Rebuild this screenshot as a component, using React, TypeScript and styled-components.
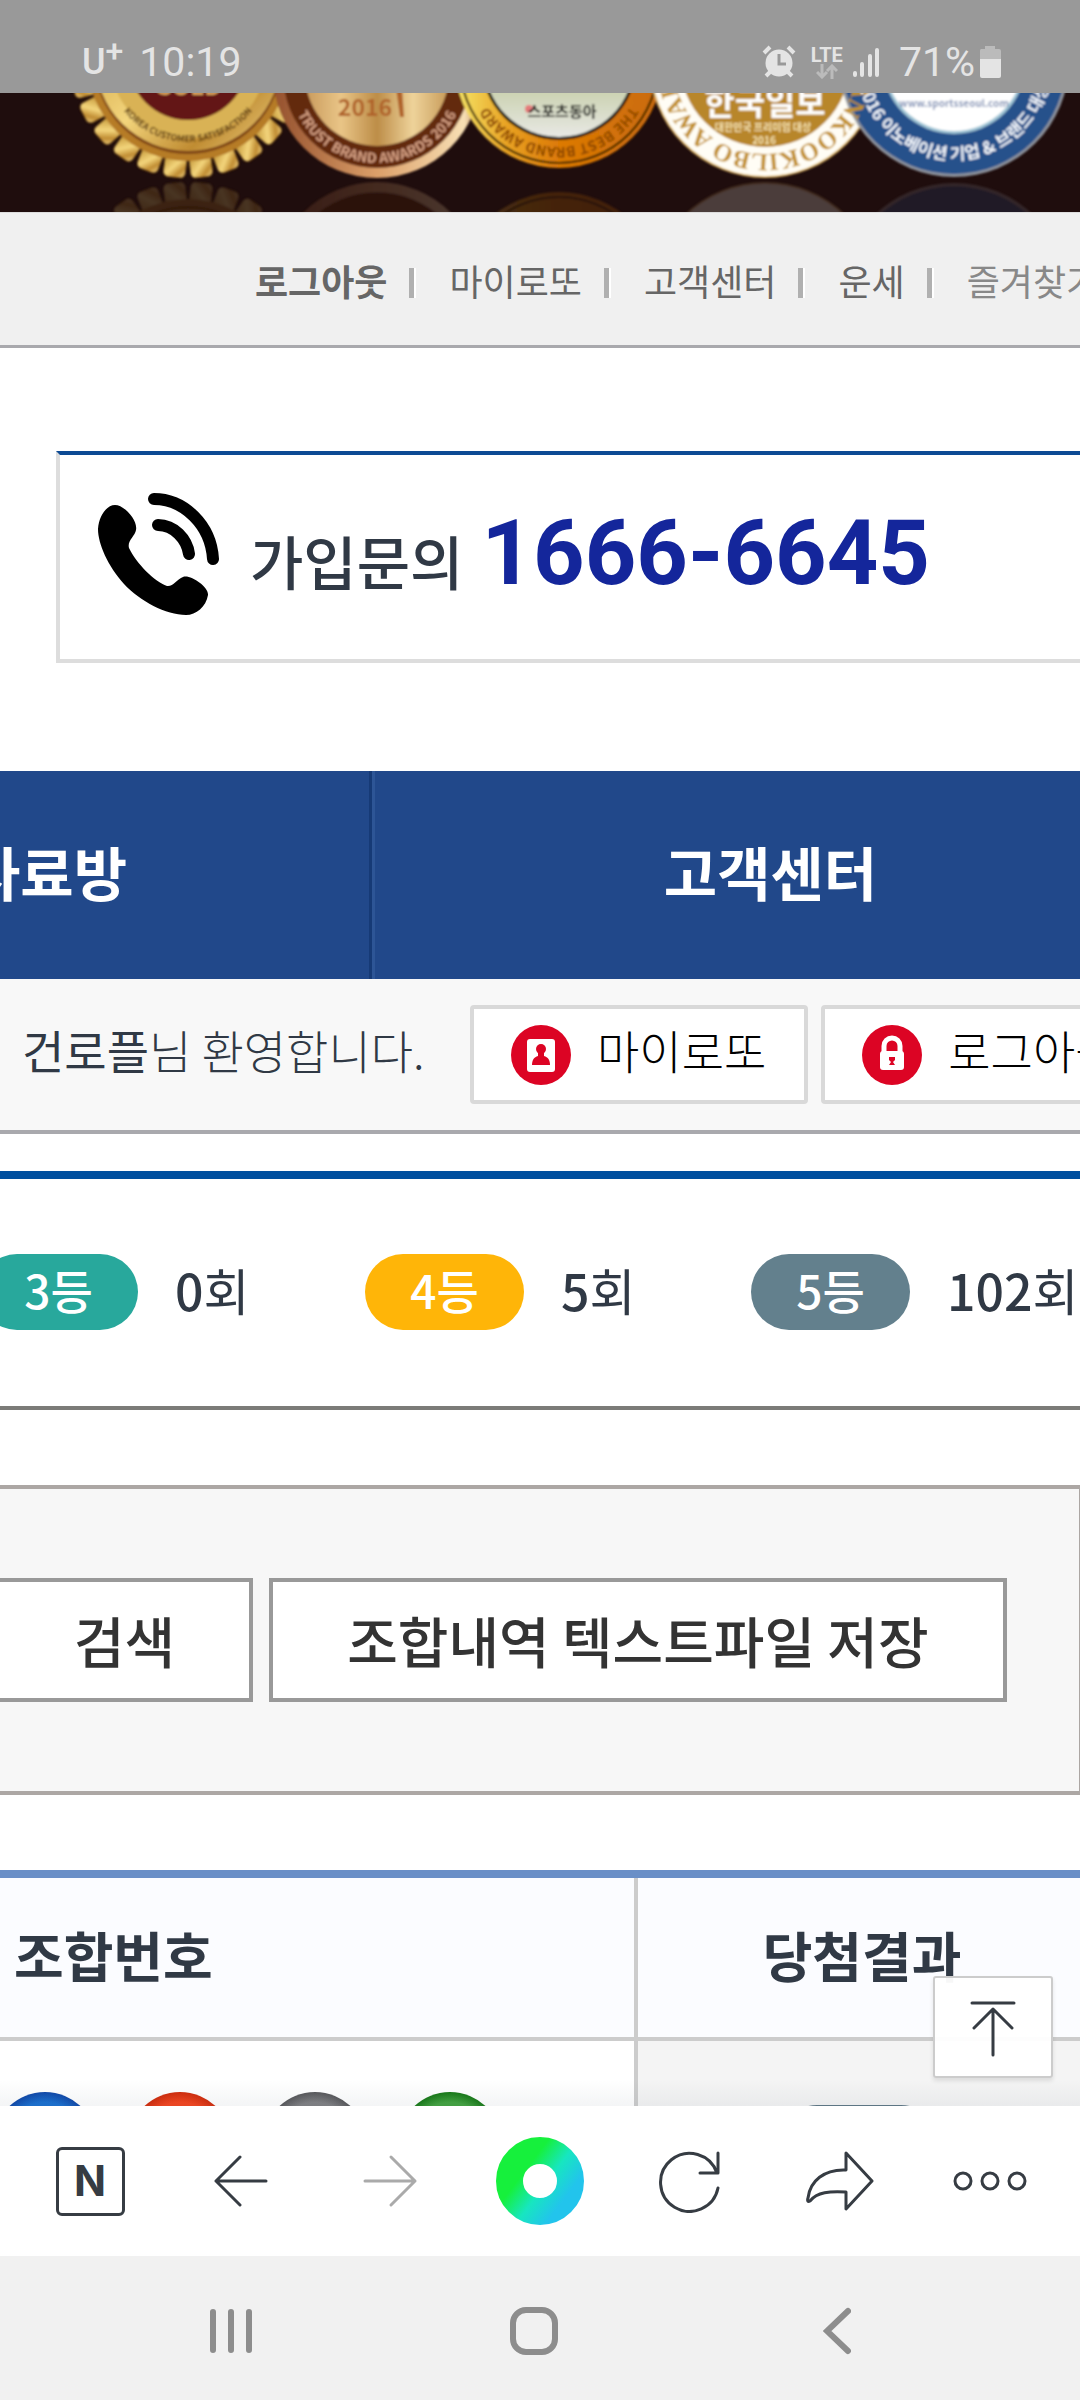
import React from "react";
import styled, { createGlobalStyle } from "styled-components";

const GlobalStyle = createGlobalStyle`
  * { box-sizing: border-box; }
  body { margin: 0; background: #fff; }
  button, a { font: inherit; color: inherit; text-decoration: none; }
  button { margin: 0; padding: 0; border: 0; background: none; }
  ul { margin: 0; padding: 0; list-style: none; }
`;

const Screen = styled.div`
  display: flex;
  flex-direction: column;
  height: 100vh;
  overflow: hidden;
  color: #303945;
  font-family: "Noto Sans CJK KR", "Noto Sans", sans-serif;
`;

/* ---------- status bar ---------- */

const StatusBar = styled.header`
  display: flex;
  justify-content: space-between;
  flex: none;
  height: 93px;
  padding: 39px 77px 0 82px;
  background: #999;
  color: #e4e4e4;
  font: 400 41px/46px Roboto, sans-serif;
`;

const StatusGroup = styled.div`
  display: flex;
  align-items: center;
  height: 46px;
`;

const Carrier = styled.span`
  display: flex;
  margin-right: 16px;
  font-weight: 500;
  font-size: 36px;
  sup {
    font-size: 32px;
    line-height: 24px;
  }
`;

const StatusIcon = styled.svg<{ $gap: number }>`
  flex: none;
  margin-right: ${(p) => p.$gap}px;
`;

const Network = styled.span`
  display: flex;
  flex-direction: column;
  align-items: center;
  margin-right: 9px;
  font-weight: 700;
  font-size: 20px;
  line-height: 18px;
`;

/* ---------- web page ---------- */

const Page = styled.main`
  position: relative;
  flex: 1;
  min-height: 0;
  overflow: hidden;
  background: #fff;
`;

const Awards = styled.svg`
  display: block;
  width: 100%;
  height: 119px;
  background: #1f0d0d;
`;

const TopLinks = styled.nav`
  display: flex;
  align-items: center;
  height: 136px;
  padding: 2px 0 0 255px;
  overflow: hidden;
  background: #f0f0f0;
  border-top: 1px solid #ddd;
  border-bottom: 3px solid #a9a9ad;
  font-size: 36px;
  line-height: 52px;
  white-space: nowrap;
`;

const TopLink = styled.a<{ $bold?: boolean; $dim?: boolean }>`
  flex: none;
  color: ${(p) => (p.$dim ? "#888" : "#666")};
  font-weight: ${(p) => (p.$bold ? 700 : 400)};
  &:not(:first-child)::before {
    content: "";
    display: inline-block;
    width: 5px;
    height: 30px;
    margin: 0 33px 0 22px;
    background: #b0b0b0;
    border-right: 2px solid #fff;
    vertical-align: -2px;
  }
`;

const Inquiry = styled.section`
  display: flex;
  align-items: center;
  height: 212px;
  margin: 103px 0 108px 56px;
  padding: 0 0 6px 37px;
  border: 4px solid #ddd;
  border-top-color: #0d4a94;
  border-right: 0;
  white-space: nowrap;
`;

const InquiryLabel = styled.span`
  margin: 12px 18px 0 31px;
  font-weight: 500;
  font-size: 58px;
  line-height: 80px;
`;

const InquiryNumber = styled.a`
  color: #14269b;
  font: 700 90px/108px Roboto, sans-serif;
`;

const MainMenu = styled.nav`
  display: flex;
  height: 208px;
  background: #21488a;
  color: #fff;
  font-weight: 700;
  font-size: 58px;
  white-space: nowrap;
`;

const MenuLeft = styled.a`
  display: flex;
  flex: none;
  align-items: center;
  justify-content: flex-end;
  width: 372px;
  padding: 0 242px 8px 0;
  border-right: 3px solid #163a76;
`;

const MenuCenter = styled.a`
  display: flex;
  flex: 1;
  align-items: center;
  justify-content: center;
  padding: 0 0 8px 86px;
  border-left: 3px solid #2d5596;
`;

const Welcome = styled.section`
  display: flex;
  height: 155px;
  padding: 26px 0 0 22px;
  overflow: hidden;
  background: #f8f8f8;
  border-bottom: 4px solid #a9a9ad;
  font-weight: 300;
  font-size: 46px;
  line-height: 88px;
  white-space: nowrap;
`;

const Greeting = styled.p`
  flex: none;
  width: 448px;
  margin: 0;
`;

const AccountButton = styled.button`
  display: flex;
  flex: none;
  align-items: center;
  gap: 26px;
  height: 99px;
  margin-right: 13px;
  padding: 0 38px 0 37px;
  background: #fff;
  border: 4px solid #d9d9d9;
  border-radius: 4px;
  color: #000;
`;

const ButtonText = styled.span`
  padding-bottom: 12px;
  line-height: 76px;
`;

const Ranks = styled.section`
  display: flex;
  height: 239px;
  margin-top: 37px;
  padding-top: 75px;
  overflow: hidden;
  border-top: 8px solid #004f9f;
  border-bottom: 4px solid #7b7b78;
`;

const RankList = styled.ul`
  display: flex;
  margin-left: -21px;
  font-size: 50px;
  line-height: 70px;
  white-space: nowrap;
`;

const Rank = styled.li`
  display: flex;
  flex: none;
  gap: 37px;
  width: 386px;
`;

const Count = styled.b`
  font-weight: 500;
`;

const Pill = styled.span<{ $color: string }>`
  flex: none;
  width: 159px;
  height: 76px;
  border-radius: 38px;
  background: ${(p) => p.$color};
  color: #fff;
  font-weight: 500;
  font-size: 46px;
  text-align: center;
`;

const SearchPanel = styled.form`
  display: flex;
  gap: 16px;
  height: 310px;
  margin-top: 75px;
  padding: 89px 0;
  background: #f7f7f7;
  border: solid #aca7a4;
  border-width: 4px 1px 4px 0;
`;

const PanelButton = styled.button<{ $cut?: boolean }>`
  height: 124px;
  padding: 0 74px 2px;
  background: #fff;
  border: 4px solid #999;
  border-left-width: ${(p) => (p.$cut ? 0 : 4)}px;
  color: #333;
  font-weight: 500;
  font-size: 55px;
  line-height: 80px;
  white-space: nowrap;
`;

const Results = styled.table`
  width: 100%;
  margin-top: 75px;
  border-spacing: 0;
  border-top: 8px solid #6a8fc7;
  table-layout: fixed;
`;

const HeadCell = styled.th<{ $first?: boolean }>`
  width: ${(p) => (p.$first ? "638px" : "auto")};
  height: 163px;
  padding: 0 0 6px ${(p) => (p.$first ? 14 : 6)}px;
  background: #fbfcff;
  border: solid #ccc;
  border-width: 0 ${(p) => (p.$first ? 4 : 0)}px 4px 0;
  font-weight: 700;
  font-size: 54px;
  line-height: 80px;
  text-align: ${(p) => (p.$first ? "left" : "center")};
`;

const Cell = styled.td<{ $first?: boolean }>`
  height: 200px;
  padding: ${(p) => (p.$first ? 51 : 64)}px 0 0;
  background: ${(p) => (p.$first ? "#fff" : "#f4f4f4")};
  border-right: ${(p) => (p.$first ? 4 : 0)}px solid #ccc;
  vertical-align: top;
`;

const Balls = styled.div`
  display: flex;
  gap: 31px;
  margin-left: -7px;
`;

const Ball = styled.span<{ $color: string; $edge: string }>`
  width: 104px;
  height: 104px;
  border-radius: 50%;
  background: radial-gradient(circle closest-side, ${(p) => p.$color} 80%, ${(p) => p.$edge} 100%);
`;

const ResultPill = styled.div`
  width: 160px;
  height: 76px;
  margin: 0 auto;
  border-radius: 38px;
  background: #5f7886;
`;

const TopButton = styled.button`
  position: absolute;
  right: 27px;
  bottom: 28px;
  display: grid;
  place-items: center;
  width: 120px;
  height: 102px;
  padding-top: 4px;
  background: rgba(255, 255, 255, 0.96);
  border: 2px solid #ccc;
  border-radius: 3px;
  box-shadow: 0 3px 4px rgba(0, 0, 0, 0.1);
`;

const Shade = styled.div`
  position: absolute;
  left: 0;
  right: 0;
  bottom: 0;
  height: 26px;
  background: linear-gradient(rgba(60, 80, 100, 0), rgba(60, 80, 100, 0.06));
`;

/* ---------- bottom bars ---------- */

const BrowserBar = styled.nav`
  display: grid;
  grid-template-columns: repeat(7, 1fr);
  flex: none;
  height: 150px;
  padding: 0 15px;
  background: #fff;
`;

const SystemBar = styled.nav`
  display: grid;
  grid-template-columns: repeat(3, 1fr);
  flex: none;
  height: 144px;
  padding: 6px 92px 0 80px;
  background: #f1f1f1;
`;

const BarButton = styled.button`
  display: grid;
  place-items: center;
`;

const NLogo = styled.span`
  display: grid;
  place-items: center;
  width: 69px;
  height: 69px;
  border: 3px solid #363c43;
  border-radius: 6px;
  color: #363c43;
  font: 700 42px/48px Inter, sans-serif;
`;

const arc = (cx: number, cy: number, r: number, outward: boolean) =>
  outward
    ? `M${cx - r} ${cy}A${r} ${r} 0 0 0 ${cx + r} ${cy}`
    : `M${cx + r} ${cy}A${r} ${r} 0 0 1 ${cx - r} ${cy}`;

const Medals = () => (
  <g>
    <g fill="url(#gold)">
      {Array.from({ length: 26 }, (_, i) => (
        <rect
          key={i}
          x="177"
          y="154"
          width="22"
          height="24"
          rx="5"
          stroke="#6b4310"
          strokeWidth="1"
          transform={`rotate(${(i + 0.5) * (360 / 26)} 188 60)`}
        />
      ))}
    </g>
    <circle cx="188" cy="60" r="101" fill="#b67b28" />
    <circle cx="188" cy="60" r="94" fill="#7c4312" />
    <circle cx="188" cy="58" r="93" fill="url(#gold)" />
    <circle cx="188" cy="60" r="78" fill="#d9b254" />
    <circle cx="188" cy="60" r="60" fill="#641414" />

    <circle cx="377" cy="74" r="104" fill="url(#bronze)" />
    <circle cx="377" cy="74" r="94" fill="#642a10" />
    <circle cx="377" cy="74" r="72" fill="url(#brushed)" />

    <circle cx="559" cy="64" r="104" fill="url(#orange)" />
    <circle cx="559" cy="64" r="99" fill="none" stroke="#2a1a05" strokeWidth="2" />
    <circle cx="559" cy="62" r="78" fill="#15150c" />
    <circle cx="559" cy="62" r="75" fill="url(#sage)" />

    <circle cx="765" cy="62" r="115" fill="#fffdf5" stroke="#d8b264" strokeWidth="2" />
    <circle cx="765" cy="62" r="85" fill="#b8862a" />

    <circle cx="954" cy="62" r="115" fill="#8d939d" />
    <circle cx="954" cy="62" r="112" fill="#28518b" />
    <circle cx="954" cy="62" r="72" fill="#9cc3d4" />
    <circle cx="954" cy="62" r="69" fill="#fff" />
  </g>
);

const AwardBanner = () => (
  <Awards viewBox="0 93 1080 119" preserveAspectRatio="xMidYMin slice" role="img" aria-label="수상 내역">
    <defs>
      <linearGradient id="gold" x1="0" y1="0" x2="1" y2="1">
        <stop offset="0" stopColor="#b98828" />
        <stop offset="0.5" stopColor="#f3d57c" />
        <stop offset="0.75" stopColor="#c08c32" />
        <stop offset="1" stopColor="#efd386" />
      </linearGradient>
      <linearGradient id="bronze">
        <stop offset="0" stopColor="#94502d" />
        <stop offset="0.5" stopColor="#dca06a" />
        <stop offset="0.92" stopColor="#f7dfb4" />
        <stop offset="1" stopColor="#b57c50" />
      </linearGradient>
      <linearGradient id="brushed">
        <stop offset="0" stopColor="#c99a5c" />
        <stop offset="0.25" stopColor="#e9c587" />
        <stop offset="0.5" stopColor="#bd8d48" />
        <stop offset="0.75" stopColor="#eed39a" />
        <stop offset="1" stopColor="#c79a58" />
      </linearGradient>
      <linearGradient id="orange">
        <stop offset="0" stopColor="#f6e86a" />
        <stop offset="0.25" stopColor="#e8a223" />
        <stop offset="0.5" stopColor="#dd7a06" />
        <stop offset="1" stopColor="#c96a08" />
      </linearGradient>
      <linearGradient id="sage" x1="0" y1="0" x2="0" y2="1">
        <stop offset="0.6" stopColor="#c2cba2" />
        <stop offset="1" stopColor="#e8e8e4" />
      </linearGradient>
      <filter id="soft">
        <feGaussianBlur stdDeviation="1" />
      </filter>
      <path id="arc1" d={arc(188, 60, 82, true)} />
      <path id="arc2" d={arc(377, 74, 89, true)} />
      <path id="arc3" d={arc(559, 64, 83, false)} />
      <path id="arc4" d={arc(765, 62, 92, false)} />
      <path id="arc5" d={arc(954, 62, 98, true)} />
    </defs>
    <g filter="url(#soft)">
      <g transform="translate(0 360) scale(1 -1)" opacity="0.2">
        <Medals />
      </g>
      <Medals />
      <g textAnchor="middle" fontFamily="'Noto Sans CJK KR', sans-serif" fontWeight="700">
        <text x="188" y="95" fontSize="24" fill="#d9a05c">GOLD</text>
        <text fontSize="9" fill="#5a3a10">
          <textPath href="#arc1" startOffset="50%">KOREA CUSTOMER SATISFACTION</textPath>
        </text>
        <text x="365" y="116" fontSize="23" fill="#b0642a">2016</text>
        <path d="M396 88l6 0 2 29-4 0z" fill="#b0642a" />
        <text fontSize="14" fill="#d5a184">
          <textPath href="#arc2" startOffset="50%">TRUST BRAND AWARDS 2016</textPath>
        </text>
        <circle cx="529" cy="109" r="4" fill="#e57a7a" />
        <text x="562" y="117" fontSize="15" fill="#111">스포츠동아</text>
        <text fontSize="14" fill="#8a4503">
          <textPath href="#arc3" startOffset="50%">THE BEST BRAND AWARD</textPath>
        </text>
        <text x="765" y="115" fontSize="33" fill="#fff">한국일보</text>
        <text x="763" y="131" fontSize="10" fill="#f6e3b0">대한민국 프리미엄 대상</text>
        <text x="764" y="144" fontSize="10" fill="#f6e3b0">2016</text>
        <text fontSize="25" fill="#c3922f" fontFamily="'Liberation Serif', serif">
          <textPath href="#arc4" startOffset="50%">HANKOOKILBO AWARD</textPath>
        </text>
        <text x="954" y="107" fontSize="10" fill="#8796b8">www.sportsseoul.com</text>
        <text fontSize="17" fill="#f2f5fa">
          <textPath href="#arc5" startOffset="50%">2016 이노베이션 기업 &amp; 브랜드 대상</textPath>
        </text>
      </g>
    </g>
  </Awards>
);

const ranks = [
  { name: "3등", color: "#28a89c", count: "0" },
  { name: "4등", color: "#ffb508", count: "5" },
  { name: "5등", color: "#63808d", count: "102" },
];

const balls = [
  { color: "#1a70d0", edge: "#1048a8" },
  { color: "#f4451f", edge: "#cf2c0c" },
  { color: "#808083", edge: "#57575a" },
  { color: "#43a340", edge: "#177817" },
];

const line = { fill: "none", stroke: "#363c43", strokeWidth: 3, strokeLinecap: "round", strokeLinejoin: "round" } as const;

export default function App() {
  return (
    <Screen>
      <GlobalStyle />
      <StatusBar>
        <StatusGroup>
          <Carrier>U<sup>+</sup></Carrier>
          <span>10:19</span>
        </StatusGroup>
        <StatusGroup>
          <StatusIcon $gap={15} width="34" height="34" viewBox="0 0 34 34" aria-hidden="true">
            <circle cx="17" cy="18" r="13.5" fill="#e4e4e4" />
            <path d="M2 8l6-6M32 8l-6-6M9 26l-5 5M25 26l5 5" stroke="#e4e4e4" strokeWidth="4" />
            <path d="M17 9v10h7" fill="none" stroke="#999" strokeWidth="3" />
          </StatusIcon>
          <Network>
            LTE
            <svg width="22" height="15" viewBox="0 0 22 15" fill="none" stroke="#bbb" strokeWidth="3" aria-hidden="true">
              <path d="M6 0v12M1 8l5 5 5-5M16 15V3M11 7l5-5 5 5" />
            </svg>
          </Network>
          <StatusIcon $gap={19} width="28" height="32" viewBox="0 0 28 32" aria-hidden="true">
            <path d="M3 27v2M10 18v11M18 10v19M25 4v25" stroke="#e4e4e4" strokeWidth="4" strokeLinecap="round" />
          </StatusIcon>
          <span>71%</span>
          <StatusIcon $gap={0} width="28" height="34" viewBox="0 0 28 34" aria-hidden="true">
            <path d="M6 4h4V1h10v3h4a2 2 0 0 1 2 2v8H5V6a2 2 0 0 1 1-2z" fill="#bbb" />
            <path d="M5 14h21v17a2 2 0 0 1-2 2H7a2 2 0 0 1-2-2z" fill="#e4e4e4" />
          </StatusIcon>
        </StatusGroup>
      </StatusBar>

      <Page>
        <AwardBanner />
        <TopLinks>
          <TopLink href="#logout" $bold>로그아웃</TopLink>
          <TopLink href="#my">마이로또</TopLink>
          <TopLink href="#help">고객센터</TopLink>
          <TopLink href="#fortune">운세</TopLink>
          <TopLink href="#favorite" $dim>즐겨찾기</TopLink>
        </TopLinks>

        <Inquiry>
          <svg width="122" height="122" viewBox="0 0 122 122" aria-hidden="true">
            <path
              d="M18 12C10 12 2 22 1 36c0 15 10 37 26 55 16 17 42 31 62 31 10 0 20-8 22-20 1-8-18-21-25-18-6 2-10 10-16 9-12-4-31-23-38-38-2-7 6-12 7-18C41 27 27 12 18 12z"
              fill="#000"
            />
            <path d="M57 6c30 0 57 26 59 60M61 32c16 0 29 14 31 29" fill="none" stroke="#000" strokeWidth="12" strokeLinecap="round" />
          </svg>
          <InquiryLabel>가입문의</InquiryLabel>
          <InquiryNumber href="tel:1666-6645">1666-6645</InquiryNumber>
        </Inquiry>

        <MainMenu>
          <MenuLeft href="#data">자료방</MenuLeft>
          <MenuCenter href="#help">고객센터</MenuCenter>
        </MainMenu>

        <Welcome>
          <Greeting><b>건로플</b>님 환영합니다.</Greeting>
          <AccountButton type="button">
            <svg width="60" height="60" viewBox="0 0 60 60" aria-hidden="true">
              <circle cx="30" cy="30" r="30" fill="#dc0424" />
              <rect x="16" y="14" width="28" height="33" rx="3" fill="#fff" />
              <circle cx="30" cy="24" r="5" fill="#dc0424" />
              <path d="M27 26h6v5c4 1 6 4 6 9H21c0-5 2-8 6-9z" fill="#dc0424" />
            </svg>
            <ButtonText>마이로또</ButtonText>
          </AccountButton>
          <AccountButton type="button">
            <svg width="60" height="60" viewBox="0 0 60 60" aria-hidden="true">
              <circle cx="30" cy="30" r="30" fill="#dc0424" />
              <path d="M22 29v-8a8 8 0 0 1 16 0v8" fill="none" stroke="#fff" strokeWidth="5" />
              <rect x="18" y="26" width="24" height="19" rx="3" fill="#fff" />
              <path d="M27 32h6v3l-2 2 2 3h-6l2-3-2-2z" fill="#dc0424" />
            </svg>
            <ButtonText>로그아웃</ButtonText>
          </AccountButton>
        </Welcome>

        <Ranks>
          <RankList>
            {ranks.map((r) => (
              <Rank key={r.name}>
                <Pill $color={r.color}>{r.name}</Pill>
                <span><Count>{r.count}</Count>회</span>
              </Rank>
            ))}
          </RankList>
        </Ranks>

        <SearchPanel onSubmit={(e) => e.preventDefault()}>
          <PanelButton type="submit" $cut>검색</PanelButton>
          <PanelButton type="button">조합내역 텍스트파일 저장</PanelButton>
        </SearchPanel>

        <Results>
          <thead>
            <tr>
              <HeadCell scope="col" $first>조합번호</HeadCell>
              <HeadCell scope="col">당첨결과</HeadCell>
            </tr>
          </thead>
          <tbody>
            <tr>
              <Cell $first>
                <Balls>
                  {balls.map((b) => (
                    <Ball key={b.color} $color={b.color} $edge={b.edge} />
                  ))}
                </Balls>
              </Cell>
              <Cell><ResultPill /></Cell>
            </tr>
          </tbody>
        </Results>

        <Shade />
        <TopButton type="button" aria-label="맨 위로">
          <svg width="46" height="56" viewBox="0 0 46 56" {...line}>
            <path d="M2 2h42M23 8v46M4 27L23 8l19 19" />
          </svg>
        </TopButton>
      </Page>

      <BrowserBar>
        <BarButton type="button" aria-label="홈"><NLogo>N</NLogo></BarButton>
        <BarButton type="button" aria-label="뒤로">
          <svg width="56" height="56" viewBox="0 0 56 56" {...line}><path d="M54 28H4M28 4L4 28l24 24" /></svg>
        </BarButton>
        <BarButton type="button" aria-label="앞으로">
          <svg width="56" height="56" viewBox="0 0 56 56" {...line} stroke="#aaa"><path d="M3 28h50M29 4l24 24-24 24" /></svg>
        </BarButton>
        <BarButton type="button" aria-label="그린닷">
          <svg width="88" height="88" viewBox="0 0 88 88">
            <defs>
              <linearGradient id="dot" x1="0.1" y1="0.2" x2="0.9" y2="0.8">
                <stop offset="0.2" stopColor="#16f03c" />
                <stop offset="0.6" stopColor="#17e6c0" />
                <stop offset="1" stopColor="#22c4ec" />
              </linearGradient>
            </defs>
            <circle cx="44" cy="44" r="30.5" fill="none" stroke="url(#dot)" strokeWidth="27" />
          </svg>
        </BarButton>
        <BarButton type="button" aria-label="새로고침">
          <svg width="64" height="64" viewBox="0 0 64 64" {...line}>
            <path d="M60 4v20H42M59 24A29 29 0 1 0 60 39" />
          </svg>
        </BarButton>
        <BarButton type="button" aria-label="공유">
          <svg width="68" height="60" viewBox="0 0 68 60" {...line}>
            <path d="M40 2l26 28-26 28V41C24 40 11 41 4 50c-2 1-3 0-2-3C4 30 18 18 40 19z" />
          </svg>
        </BarButton>
        <BarButton type="button" aria-label="더보기">
          <svg width="74" height="22" viewBox="0 0 74 22" {...line}>
            <circle cx="10" cy="11" r="8" />
            <circle cx="37" cy="11" r="8" />
            <circle cx="64" cy="11" r="8" />
          </svg>
        </BarButton>
      </BrowserBar>

      <SystemBar>
        <BarButton type="button" aria-label="최근 앱">
          <svg width="44" height="46" viewBox="0 0 44 46" stroke="#8d8d8d" strokeWidth="6" strokeLinecap="round">
            <path d="M4 4v38M22 4v38M40 4v38" />
          </svg>
        </BarButton>
        <BarButton type="button" aria-label="시스템 홈">
          <svg width="48" height="48" viewBox="0 0 48 48" fill="none" stroke="#8d8d8d" strokeWidth="6">
            <rect x="3" y="3" width="42" height="42" rx="13" />
          </svg>
        </BarButton>
        <BarButton type="button" aria-label="시스템 뒤로">
          <svg width="28" height="48" viewBox="0 0 28 48" fill="none" stroke="#8d8d8d" strokeWidth="6" strokeLinecap="round">
            <path d="M25 4L4 24l21 20" />
          </svg>
        </BarButton>
      </SystemBar>
    </Screen>
  );
}
